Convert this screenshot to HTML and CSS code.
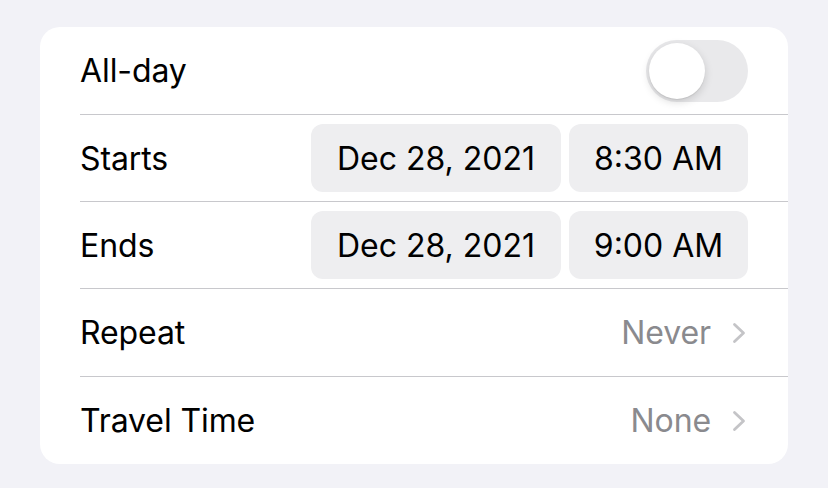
FILE: index.html
```html
<!DOCTYPE html>
<html>
<head>
<meta charset="utf-8">
<link rel="stylesheet" href="styles.css">
</head>
<body>
<div class="card">
  <div class="row r1">
    <span class="label">All-day</span>
    <div class="toggle"><div class="knob"></div></div>
  </div>
  <div class="row r2">
    <span class="label">Starts</span>
    <div class="pills">
      <span class="pill date">Dec 28, 2021</span>
      <span class="pill time">8:30 AM</span>
    </div>
  </div>
  <div class="row r3">
    <span class="label">Ends</span>
    <div class="pills">
      <span class="pill date">Dec 28, 2021</span>
      <span class="pill time">9:00 AM</span>
    </div>
  </div>
  <div class="row r4">
    <span class="label">Repeat</span>
    <div class="value">
      <span>Never</span>
      <svg class="chev" width="14" height="22" viewBox="0 0 14 22"><path d="M2.5 2.5 L11.5 11 L2.5 19.5" fill="none" stroke="#c4c4c7" stroke-width="2.8" stroke-linecap="round" stroke-linejoin="round"/></svg>
    </div>
  </div>
  <div class="row r5 last">
    <span class="label">Travel Time</span>
    <div class="value">
      <span>None</span>
      <svg class="chev" width="14" height="22" viewBox="0 0 14 22"><path d="M2.5 2.5 L11.5 11 L2.5 19.5" fill="none" stroke="#c4c4c7" stroke-width="2.8" stroke-linecap="round" stroke-linejoin="round"/></svg>
    </div>
  </div>
</div>
</body>
</html>
```
FILE: styles.css
```css
html, body {
  margin: 0;
  padding: 0;
  background: #f2f2f7;
}
body {
  padding: 27px 40px 0 40px;
  font-family: Inter, "Liberation Sans", sans-serif;
  font-size: 32px;
  color: #000;
}
.card {
  width: 748px;
  background: #fff;
  border-radius: 20px;
  padding-left: 40px;
  box-sizing: border-box;
}
.row {
  display: flex;
  align-items: center;
  justify-content: space-between;
  padding-right: 40px;
  box-sizing: border-box;
  border-bottom: 1px solid #c8c8cc;
  height: 87px;
}
.row.r1, .row.r4 { height: 88px; }
.row.last { border-bottom: none; }
.label {
  letter-spacing: -0.1px;
}
.toggle {
  width: 102px;
  height: 62px;
  border-radius: 31px;
  background: #e9e9eb;
  padding: 3px;
  box-sizing: border-box;
}
.knob {
  width: 56px;
  height: 56px;
  border-radius: 50%;
  background: #fff;
  box-shadow: 0 3px 8px rgba(0,0,0,0.15), 0 1px 1px rgba(0,0,0,0.08);
}
.pills {
  display: flex;
  gap: 8px;
}
.pill {
  height: 68px;
  border-radius: 12px;
  background: #eeeef0;
  display: flex;
  align-items: center;
  justify-content: center;
  letter-spacing: 0;
}
.pill.date { width: 250px; }
.pill.time { width: 179px; }
.value {
  display: flex;
  align-items: center;
  gap: 21px;
  color: #8a8a8e;
  letter-spacing: -0.1px;
}
.chev { display: block; margin-right: 2px; }
```
